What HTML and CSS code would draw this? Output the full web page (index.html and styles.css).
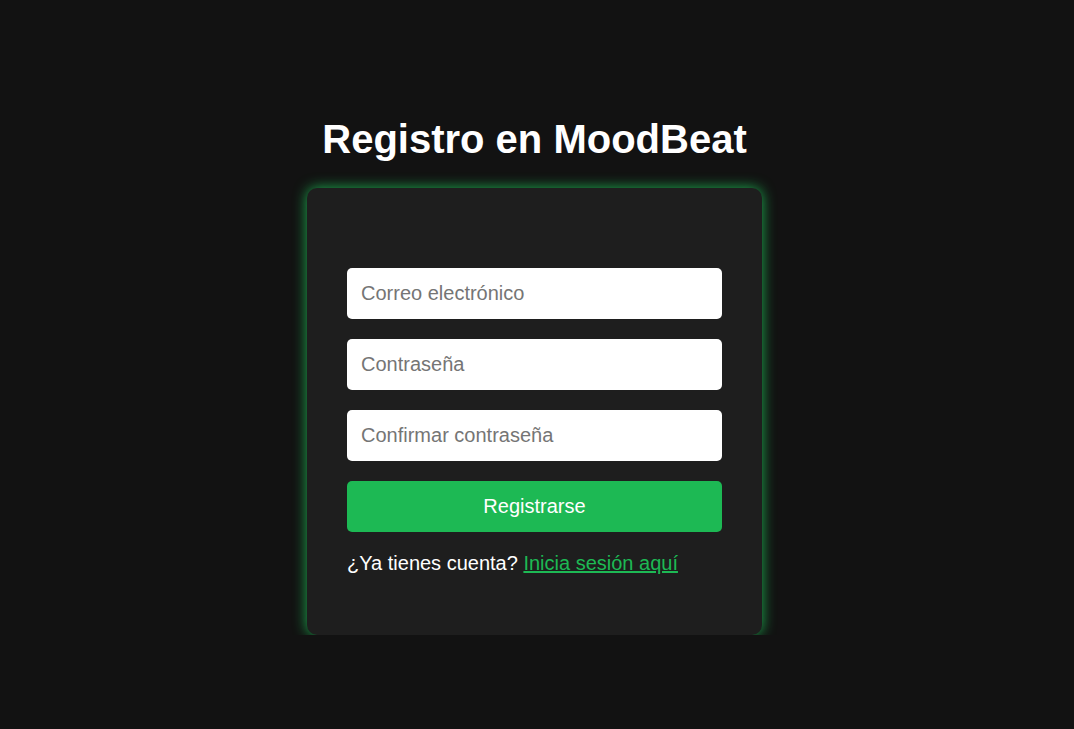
FILE: index.html
```html
<!DOCTYPE html>
<html lang="es">
<head>
<meta charset="utf-8">
<title>Registro en MoodBeat</title>
<link rel="stylesheet" href="styles.css">
</head>
<body>
<main class="page">
  <h1 class="title">Registro en MoodBeat</h1>
  <div class="card">
    <form class="form">
      <input class="field" type="email" placeholder="Correo electrónico">
      <input class="field" type="password" placeholder="Contraseña">
      <input class="field" type="password" placeholder="Confirmar contraseña">
      <button class="btn" type="button">Registrarse</button>
    </form>
    <p class="note">¿Ya tienes cuenta? <a class="link" href="#">Inicia sesión aquí</a></p>
  </div>
</main>
</body>
</html>
```
FILE: styles.css
```css
html, body {
  margin: 0;
  padding: 0;
  background: #121212;
  color: #ffffff;
  font-family: "Liberation Sans", Arial, sans-serif;
}
.page {
  display: flex;
  flex-direction: column;
  align-items: center;
  padding-top: 116px;
  padding-right: 5px;
}
.title {
  margin: 0 0 26px;
  font-size: 40px;
  font-weight: bold;
  line-height: 46px;
  color: #ffffff;
}
.card {
  box-sizing: border-box;
  width: 455px;
  padding: 80px 40px 40px;
  background: #1e1e1e;
  border-radius: 10px;
  box-shadow: 0 0 14px rgba(29, 185, 84, 0.95);
}
.form {
  display: flex;
  flex-direction: column;
  gap: 20px;
  margin: 0;
}
.field {
  box-sizing: border-box;
  width: 100%;
  height: 51px;
  padding: 14px;
  border: none;
  border-radius: 5px;
  background: #ffffff;
  font-family: "Liberation Sans", Arial, sans-serif;
  font-size: 20px;
  color: #222;
  outline: none;
}
.field::placeholder {
  color: #757575;
}
.btn {
  height: 51px;
  width: 100%;
  border: none;
  border-radius: 5px;
  background: #1db954;
  color: #ffffff;
  font-family: "Liberation Sans", Arial, sans-serif;
  font-size: 20px;
  cursor: pointer;
}
.note {
  margin: 20px 0 20px;
  font-size: 20px;
  line-height: 23px;
  color: #ffffff;
}
.link {
  color: #1db954;
  text-decoration: underline;
}
```
